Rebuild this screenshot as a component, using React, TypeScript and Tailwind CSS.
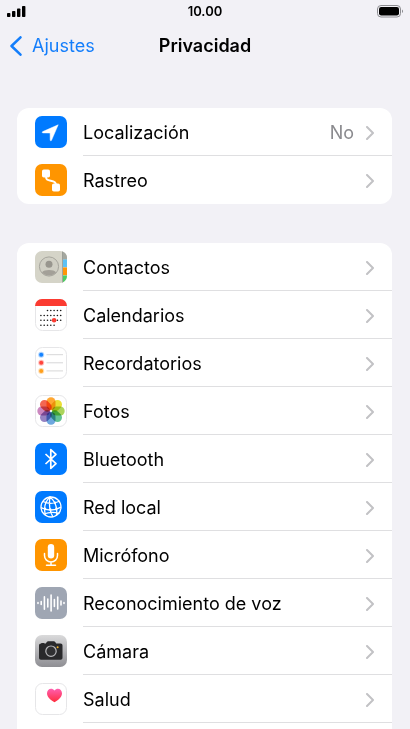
import type { ReactNode } from "react";

type Item = { label: string; value?: string; icon: ReactNode };

function Tile({ fill, outlined, children }: { fill: string; outlined?: boolean; children: ReactNode }) {
  return (
    <svg viewBox="0 0 32 32" className="size-8 shrink-0" aria-hidden="true">
      <rect
        x={outlined ? 0.5 : 0}
        y={outlined ? 0.5 : 0}
        width={outlined ? 31 : 32}
        height={outlined ? 31 : 32}
        rx="7"
        fill={fill}
        stroke={outlined ? "#e6e6e8" : "none"}
      />
      {children}
    </svg>
  );
}

const LocationIcon = () => (
  <Tile fill="#007aff">
    <path d="M23.2 8.8 7.8 15.6c-.9.4-.7 1.3.2 1.3l7.1.1.1 7c0 .9.9 1.1 1.3.3z" fill="#fff" stroke="#fff" strokeWidth=".5" strokeLinejoin="round" />
  </Tile>
);

const TrackingIcon = () => (
  <Tile fill="#ff9500">
    <rect x="7" y="5.5" width="8" height="8" rx="1.8" fill="#fff" />
    <rect x="17" y="19.5" width="8" height="8" rx="1.8" fill="#fff" />
    <path d="M11 12.5c0 3 1.2 3.6 4.8 4.2 3.7.6 5.2 1.3 5.2 4" fill="none" stroke="#fff" strokeWidth="1.9" />
  </Tile>
);

const ContactsIcon = () => (
  <Tile fill="#d5d4c8">
    <path d="M27.5 0.6C30.3 1.7 32 4 32 7v1.5h-4.500z" fill="#a4a79f" />
    <path d="M28 8.500H32v7.500h-4z" fill="#5cc1f5" />
    <path d="M28 16.500H32v7.500h-4z" fill="#ff9508" />
    <path d="M28 24.500H32c0 3-1.500 5.500-4 6.800z" fill="#4bce63" />
    <path d="M27.500 0.600v31" stroke="#8d918a" strokeWidth=".7" />
    <circle cx="14" cy="15.500" r="9.600" fill="#d0cfc4" stroke="#a09f97" strokeWidth=".9" />
    <circle cx="14" cy="13.300" r="3.500" fill="#98968e" />
    <path d="M7 21.500c2-3.200 12-3.200 14 0-3.400 4-10.600 4-14 0z" fill="#a3a098" />
  </Tile>
);

const CALENDAR_DOTS = [
  { y: 11.5, xs: [12.5, 15.8, 19.1, 22.4, 25.7] },
  { y: 16.5, xs: [5.9, 9.2, 12.5, 15.8, 19.1, 22.4, 25.7] },
  { y: 21.3, xs: [5.9, 9.2, 12.5, 15.8, 22.4, 25.7] },
  { y: 26.3, xs: [5.9, 9.2, 12.5, 15.8, 19.1] },
];

const CalendarIcon = () => (
  <Tile fill="#fff" outlined>
    <path d="M0 7a7 7 0 0 1 7-7h18a7 7 0 0 1 7 7z" fill="#fb3b31" />
    {CALENDAR_DOTS.map(({ y, xs }) => xs.map((x) => <circle key={`${x}-${y}`} cx={x} cy={y} r=".8" fill="#161616" />))}
    <circle cx="19.1" cy="21.3" r="2.3" fill="#fb3b31" />
  </Tile>
);

const RemindersIcon = () => (
  <Tile fill="#fff" outlined>
    {[
      { y: 7.7, color: "#1683ff" },
      { y: 15.8, color: "#ff443c" },
      { y: 23.9, color: "#ff9f1c" },
    ].map(({ y, color }) => (
      <g key={y}>
        <circle cx="6.2" cy={y} r="3" fill={color} fillOpacity=".35" />
        <circle cx="6.2" cy={y} r="2" fill={color} />
        <path d={`M11.500 ${y}H28`} stroke="#d2d2d4" strokeWidth=".9" />
      </g>
    ))}
  </Tile>
);

const PETALS = ["#ff9d1c", "#e9dc1f", "#a2cf49", "#52bd88", "#5e9fdc", "#8a75bd", "#c57ab8", "#f2573f"];

const PhotosIcon = () => (
  <Tile fill="#fff" outlined>
    {PETALS.map((color, i) => (
      <rect
        key={color}
        x="11.5"
        y="2.3"
        width="9"
        height="12.8"
        rx="4.5"
        fill={color}
        fillOpacity=".9"
        className="mix-blend-multiply"
        transform={`rotate(${i * 45} 16 16)`}
      />
    ))}
  </Tile>
);

const BluetoothIcon = () => (
  <Tile fill="#007aff">
    <path d="m10.5 11 10.5 9.700-5.200 4.700V6.600l5.200 4.700L10.500 21" fill="none" stroke="#fff" strokeWidth="1.700" strokeLinejoin="round" />
  </Tile>
);

const NetworkIcon = () => (
  <Tile fill="#007aff">
    <g fill="none" stroke="#fff" strokeWidth="1.3">
      <circle cx="16" cy="16" r="10" />
      <path d="M15 6c-5 4.500-6.500 11-4.500 18.300M15 6c5 4 7.500 10.500 6.500 18.500M15 6c-1 6-.5 14 3 20M8 10.500c5 2.500 11 2.300 17-.5M6 16.500c6 3.500 14 3.300 20-.5M9 23c5-2 10.500-2 15.500-.5" />
    </g>
    {[[15, 6.5], [10, 17.8], [15.2, 18.5], [21.5, 17.8], [20, 11.7]].map(([x, y]) => (
      <circle key={`${x}-${y}`} cx={x} cy={y} r="1.2" fill="#fff" />
    ))}
  </Tile>
);

const MicrophoneIcon = () => (
  <Tile fill="#ff9500">
    <rect x="12.8" y="5" width="6.4" height="14.5" rx="3.2" fill="#fff" />
    <path d="M9.5 14.500v2a6.500 6.500 0 0 0 13 0v-2M16 23v3M11.500 26.300h9" fill="none" stroke="#fff" strokeWidth="1.500" strokeLinecap="round" />
  </Tile>
);

const SpeechIcon = () => (
  <Tile fill="#9fa6b3">
    <path
      d="M3 15.600v.8M6.200 14.500v3M9.400 9.800v12.400M12.800 12v8M16.100 8v16M19.400 12.500v7M22.700 10v12M26 14v4M29 15.600v.8"
      stroke="#fff"
      strokeWidth="1.6"
      strokeLinecap="round"
    />
  </Tile>
);

const CameraIcon = () => (
  <Tile fill="url(#camera-back)">
    <defs>
      <linearGradient id="camera-back" x1="0" y1="0" x2="0" y2="1">
        <stop offset="0" stopColor="#dadadb" />
        <stop offset="1" stopColor="#8e8e93" />
      </linearGradient>
    </defs>
    <path d="M6.300 8.600V8h3v.6h1.500l1-1.600c.4-.6.7-.8 1.400-.8h5.600c.7 0 1 .2 1.400.8l1 1.600h4.300c1.300 0 2 .7 2 2v12.200c0 1.300-.7 2-2 2H6c-1.300 0-2-.7-2-2V10.600c0-1.300.7-2 2.300-2z" fill="#29292b" />
    <circle cx="16" cy="16.2" r="5.2" fill="#303032" stroke="#b9b9bc" strokeWidth="1.2" />
    <circle cx="22.6" cy="12.2" r="1" fill="#f5b52a" />
  </Tile>
);

const HealthIcon = () => (
  <Tile fill="#fff" outlined>
    <defs>
      <linearGradient id="heart" x1="0" y1="0" x2="0" y2="1">
        <stop offset="0" stopColor="#ff5fb0" />
        <stop offset="1" stopColor="#ff2c3c" />
      </linearGradient>
    </defs>
    <path d="M19.500 19.300c-4.600-2.700-7.500-5.700-7.500-9.100 0-4.600 5-6.100 7.500-2.700 2.500-3.400 7.500-1.900 7.500 2.700 0 3.400-2.900 6.400-7.500 9.100z" fill="url(#heart)" />
  </Tile>
);

const SYSTEM_ITEMS: Item[] = [
  { label: "Localización", value: "No", icon: <LocationIcon /> },
  { label: "Rastreo", icon: <TrackingIcon /> },
];

const APP_ITEMS: Item[] = [
  { label: "Contactos", icon: <ContactsIcon /> },
  { label: "Calendarios", icon: <CalendarIcon /> },
  { label: "Recordatorios", icon: <RemindersIcon /> },
  { label: "Fotos", icon: <PhotosIcon /> },
  { label: "Bluetooth", icon: <BluetoothIcon /> },
  { label: "Red local", icon: <NetworkIcon /> },
  { label: "Micrófono", icon: <MicrophoneIcon /> },
  { label: "Reconocimiento de voz", icon: <SpeechIcon /> },
  { label: "Cámara", icon: <CameraIcon /> },
  { label: "Salud", icon: <HealthIcon /> },
];

function Row({ label, value, icon, divided }: Item & { divided: boolean }) {
  return (
    <li>
      <button type="button" className="flex h-12 w-full items-center gap-4 pl-[18px] text-left">
        {icon}
        <span className={`flex h-full min-w-0 flex-1 items-center gap-3 border-b pt-0.5 pr-[18px] ${divided ? "border-[#dfdfe1]" : "border-transparent"}`}>
          <span className="flex-1 truncate">{label}</span>
          {value && <span className="text-[#8a8a8e]">{value}</span>}
          <svg viewBox="0 0 8 14" className="h-3.5 w-2 shrink-0" fill="none" stroke="#c2c2c5" strokeWidth="2" strokeLinecap="round" strokeLinejoin="round" aria-hidden="true">
            <path d="m1 1 6 6-6 6" />
          </svg>
        </span>
      </button>
    </li>
  );
}

function StatusBar() {
  return (
    <div className="grid h-[22px] grid-cols-3 items-center px-1.5">
      <svg viewBox="0 0 20 12" className="h-3 w-5" aria-hidden="true">
        <rect x="1" y="8" width="3.4" height="4" rx=".8" />
        <rect x="6" y="6" width="3.4" height="6" rx=".8" />
        <rect x="11" y="3.5" width="3.4" height="8.5" rx=".8" />
        <rect x="16" y="1" width="3.4" height="11" rx=".8" />
      </svg>
      <time className="text-center text-[13px] font-semibold">10.00</time>
      <svg viewBox="0 0 28 14" className="h-3.5 w-7 justify-self-end" aria-hidden="true">
        <rect x="1.5" y="1.5" width="23" height="11.5" rx="3.5" fill="none" stroke="#8c8c90" />
        <rect x="3" y="3" width="20" height="8.5" rx="2.2" />
        <path d="M26 5.500c1.400.6 1.400 3 0 3.600z" fill="#8c8c90" />
      </svg>
    </div>
  );
}

export default function App() {
  return (
    <div className="flex h-screen flex-col overflow-hidden bg-[#f2f1f6] font-['Inter','Liberation_Sans',sans-serif] text-lg text-black">
      <StatusBar />
      <header className="grid h-12 shrink-0 grid-cols-[1fr_auto_1fr] items-center px-2.5">
        <button type="button" className="flex items-center gap-2.5 text-[#147efb]">
          <svg viewBox="0 0 12 20" className="h-5 w-3" fill="none" stroke="currentColor" strokeWidth="2.5" strokeLinecap="round" strokeLinejoin="round" aria-hidden="true">
            <path d="m10.500 1.300-9 8.700 9 8.700" />
          </svg>
          Ajustes
        </button>
        <h1 className="font-semibold">Privacidad</h1>
      </header>
      <main className="flex min-h-0 flex-1 flex-col gap-[39px] pt-[38px] pr-[18px] pl-[17px]">
        <ul className="shrink-0 rounded-xl bg-white">
          {SYSTEM_ITEMS.map((item, i) => (
            <Row key={item.label} {...item} divided={i < SYSTEM_ITEMS.length - 1} />
          ))}
        </ul>
        <ul className="min-h-0 flex-1 rounded-t-xl bg-white">
          {APP_ITEMS.map((item) => (
            <Row key={item.label} {...item} divided />
          ))}
        </ul>
      </main>
    </div>
  );
}
